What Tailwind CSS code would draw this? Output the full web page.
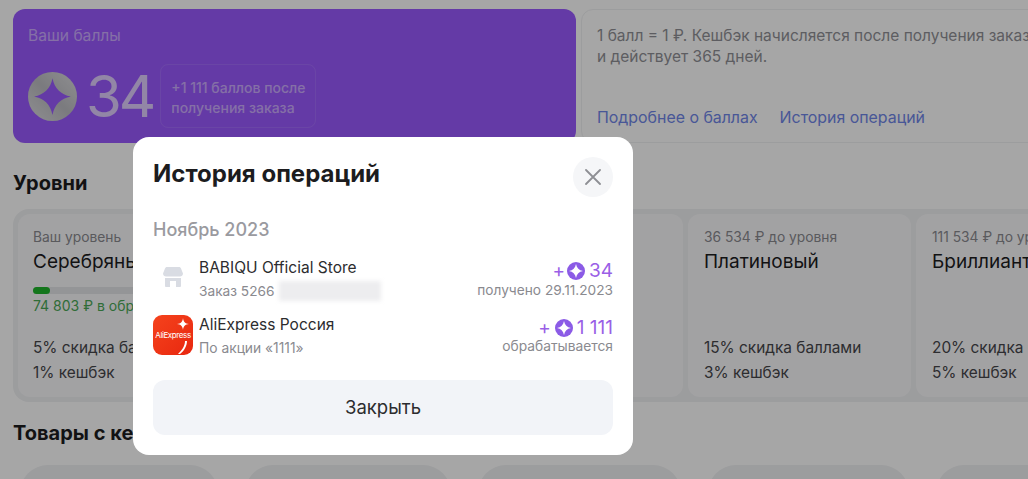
<!DOCTYPE html>
<html lang="ru">
<head>
    <meta charset="UTF-8">
    <title>История операций</title>
    <script src="https://cdn.jsdelivr.net/npm/@tailwindcss/browser@4"></script>
</head>
<body class="relative w-[1028px] h-[479px] overflow-hidden bg-white font-['Inter',sans-serif] text-[#1c1c1e]">
    <!-- page behind the dialog -->
    <div class="w-[1100px] pl-[13px] pt-[9px]">
        <div class="flex gap-[5px] h-[134px]">
            <div class="w-[563px] shrink-0 rounded-xl bg-[#9a5aff] px-[15px] pt-[17px]">
                <div class="text-[15.600px] leading-5 text-white/50">Ваши баллы</div>
                <div class="flex items-center mt-[14px]">
                    <svg class="w-[49px] h-[49px]" viewBox="0 0 48 48">
                        <defs>
                            <linearGradient id="coin" x1="0" y1="1" x2="1" y2="0">
                                <stop offset="0" stop-color="#dcdce0"/>
                                <stop offset="0.5" stop-color="#bdbdc2"/>
                                <stop offset="1" stop-color="#dcdce0"/>
                            </linearGradient>
                        </defs>
                        <circle cx="24" cy="24" r="24" fill="url(#coin)"/>
                        <path d="M24 6C26 16 32 22 42 24C32 26 26 32 24 42C22 32 16 26 6 24C16 22 22 16 24 6Z" fill="#9a5aff"/>
                    </svg>
                    <span class="ml-[9px] text-[58px] leading-[72px] font-normal tracking-[-3px] text-white/70">34</span>
                    <div class="ml-[7px] w-[156px] h-[64px] rounded-lg border border-white/10 pl-[10px] py-[13px] text-[14px] leading-[20px] font-medium text-white/50 whitespace-nowrap">+1 111 баллов после<br>получения заказа</div>
                </div>
            </div>
            <div class="w-[600px] shrink-0 rounded-xl border border-[#f0f1f3] px-[15px] pt-[15px] flex flex-col">
                <p class="text-[15.500px] leading-[21px] text-[#909095]">1 балл = 1 ₽. Кешбэк начисляется после получения заказа<br>и действует 365 дней.</p>
                <div class="flex gap-[22px] mt-[40px] text-[15.900px] leading-[21px] text-[#6f86e8]">
                    <span>Подробнее о баллах</span>
                    <span>История операций</span>
                </div>
            </div>
        </div>

        <h2 class="mt-[28px] text-[20px] leading-[24px] font-bold">Уровни</h2>

        <div class="mt-[14px] h-[193px] p-[5px] rounded-2xl bg-[#f0f1f3] flex gap-[5px]">
            <div class="w-[209px] shrink-0 rounded-xl bg-[#f9f9fb] pl-[15px] pt-[15px]">
                <div class="text-[13.800px] leading-[17px] text-[#8a8a8f] whitespace-nowrap">Ваш уровень</div>
                <div class="text-[19px] leading-[24px] mt-[4px] whitespace-nowrap">Серебряный</div>
                <div class="mt-[13px] h-[7px] w-[180px] rounded-full bg-[#e4e5e8]">
                    <div class="h-[7px] w-[17px] rounded-full bg-[#1fb52b]"></div>
                </div>
                <div class="text-[14px] leading-[18px] mt-[3px] text-[#4ba856] whitespace-nowrap">74 803 ₽ в обработке</div>
                <div class="mt-[20px] text-[15.400px] leading-[25px] text-[#46464a] whitespace-nowrap">5% скидка баллами<br>1% кешбэк</div>
            </div>
            <div class="w-[223px] shrink-0 rounded-xl bg-[#f9f9fb]"></div>
            <div class="w-[223px] shrink-0 rounded-xl bg-[#f9f9fb]"></div>
            <div class="w-[223px] shrink-0 rounded-xl bg-[#f9f9fb] pl-[16px] pt-[15px]">
                <div class="text-[13.800px] leading-[17px] text-[#8a8a8f] whitespace-nowrap">36 534 ₽ до уровня</div>
                <div class="text-[19px] leading-[24px] mt-[4px] whitespace-nowrap">Платиновый</div>
                <div class="mt-[61px] text-[15.400px] leading-[25px] text-[#46464a] whitespace-nowrap">15% скидка баллами<br>3% кешбэк</div>
            </div>
            <div class="w-[223px] shrink-0 rounded-xl bg-[#f9f9fb] pl-[16px] pt-[15px]">
                <div class="text-[13.800px] leading-[17px] text-[#8a8a8f] whitespace-nowrap">111 534 ₽ до уровня</div>
                <div class="text-[19px] leading-[24px] mt-[4px] whitespace-nowrap">Бриллиантовый</div>
                <div class="mt-[61px] text-[15.400px] leading-[25px] text-[#46464a] whitespace-nowrap">20% скидка баллами<br>5% кешбэк</div>
            </div>
        </div>

        <h2 class="mt-[19px] text-[20px] leading-[24px] font-bold">Товары с кешбэком</h2>

        <div class="mt-[20px] flex gap-[27px] pl-[7px]">
            <div class="w-[198px] h-[60px] shrink-0 rounded-[28px] bg-[#f0f1f3]"></div>
            <div class="w-[206px] h-[60px] shrink-0 rounded-[28px] bg-[#f0f1f3]"></div>
            <div class="w-[203px] h-[60px] shrink-0 rounded-[28px] bg-[#f0f1f3]"></div>
            <div class="w-[201px] h-[60px] shrink-0 rounded-[28px] bg-[#f0f1f3]"></div>
            <div class="w-[203px] h-[60px] shrink-0 rounded-[28px] bg-[#f0f1f3]"></div>
        </div>
    </div>

    <!-- overlay -->
    <div class="absolute inset-0 bg-black/35"></div>

    <!-- dialog -->
    <div class="absolute left-[133px] top-[137px] w-[500px] h-[318px] rounded-2xl bg-white px-[20px] pt-[20px]">
        <div class="flex justify-between">
            <h1 class="text-[24px] leading-[34px] font-bold text-[#1c1c1e]">История операций</h1>
            <button class="w-[40px] h-[40px] rounded-full bg-[#f5f6f8] flex items-center justify-center">
                <svg class="w-[16px] h-[16px]" viewBox="0 0 16 16" fill="none" stroke="#8e8f94" stroke-width="1.800" stroke-linecap="round">
                    <path d="M1 1L15 15M15 1L1 15"/>
                </svg>
            </button>
        </div>

        <div class="mt-[21px] text-[18px] leading-[24px] font-medium text-[#9a9a9f]">Ноябрь 2023</div>

        <div class="mt-[16px] flex h-[57px]">
            <div class="w-[40px] flex justify-center pt-[9px]">
                <svg class="w-[20px] h-[20px]" viewBox="0 0 20 20" fill="#d9dce3">
                    <path d="M4 0H16C17 0 17.500 0.500 18 1.500L20 6.500C20 8.500 18.500 9.500 17 9.500H3C1.500 9.500 0 8.500 0 6.500L2 1.500C2.500 0.500 3 0 4 0Z"/>
                    <path d="M2 11H18V19C18 19.500 17.500 20 17 20H13V14H7V20H3C2.500 20 2 19.500 2 19Z"/>
                </svg>
            </div>
            <div class="ml-[6px] flex-1">
                <div class="text-[15.500px] leading-[20px] text-[#2c2c2e]">BABIQU Official Store</div>
                <div class="flex items-center mt-[3px] text-[13.700px] leading-[18px] text-[#8a8a8f]">
                    <span>Заказ 5266</span>
                    <span class="ml-[4px] w-[102px] h-[20px] bg-[#ededef] blur-[2px]"></span>
                </div>
            </div>
            <div class="flex flex-col items-end pt-[1px]">
                <div class="flex items-center text-[19px] leading-[24px] text-[#9a5fe6]">
                    <span>+</span>
                    <svg class="w-[18px] h-[18px] ml-[2px] mr-[4px]" viewBox="0 0 18 18">
                        <circle cx="9" cy="9" r="9" fill="#8b5be6"/>
                        <path d="M9 2C9.800 6 12 8.200 16 9C12 9.800 9.800 12 9 16C8.200 12 6 9.800 2 9C6 8.200 8.200 6 9 2Z" fill="#fff"/>
                    </svg>
                    <span>34</span>
                </div>
                <div class="mt-[-2px] text-[13.700px] leading-[18px] text-[#8a8a8f]">получено 29.11.2023</div>
            </div>
        </div>

        <div class="flex h-[65px]">
            <div class="relative w-[40px] h-[40px] rounded-[9px] bg-gradient-to-br from-[#f5421c] to-[#e8260f] overflow-hidden">
                <span class="absolute left-0 right-0 top-[14px] text-center text-[8px] leading-[12px] tracking-[-0.4px] text-white">AliExpress</span>
                <svg class="absolute inset-0" width="40" height="40" viewBox="0 0 40 40" fill="#fff">
                    <path d="M30 3C30.500 7 32 8.500 36 9C32 9.500 30.500 11 30 15C29.500 11 28 9.500 24 9C28 8.500 29.500 7 30 3Z"/>
                    <path d="M32 26H34C34 31 31 36 27 39H25C29 35 32 31 32 26Z"/>
                </svg>
            </div>
            <div class="ml-[6px] flex-1">
                <div class="text-[15.500px] leading-[20px] text-[#2c2c2e]">AliExpress Россия</div>
                <div class="mt-[4px] text-[13.800px] leading-[18px] text-[#8a8a8f]">По акции «1111»</div>
            </div>
            <div class="flex flex-col items-end pt-[1px]">
                <div class="flex items-center text-[19px] leading-[24px] text-[#9a5fe6]">
                    <span>+</span>
                    <svg class="w-[18px] h-[18px] mx-[4px]" viewBox="0 0 18 18">
                        <circle cx="9" cy="9" r="9" fill="#8b5be6"/>
                        <path d="M9 2C9.800 6 12 8.200 16 9C12 9.800 9.800 12 9 16C8.200 12 6 9.800 2 9C6 8.200 8.200 6 9 2Z" fill="#fff"/>
                    </svg>
                    <span>1 111</span>
                </div>
                <div class="mt-[-3px] text-[13.800px] leading-[18px] text-[#8a8a8f]">обрабатывается</div>
            </div>
        </div>

        <button class="block w-full h-[55px] rounded-xl bg-[#f2f4f8] text-[18.500px] text-[#2c2c2e]">Закрыть</button>
    </div>
</body>
</html>
